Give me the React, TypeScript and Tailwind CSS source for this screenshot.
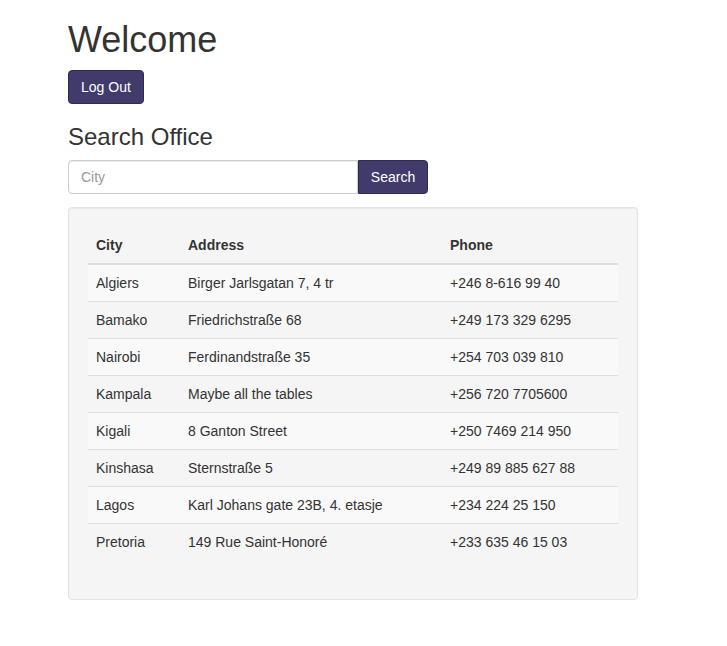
const offices = [
  { city: 'Algiers', address: 'Birger Jarlsgatan 7, 4 tr', phone: '+246 8-616 99 40' },
  { city: 'Bamako', address: 'Friedrichstraße 68', phone: '+249 173 329 6295' },
  { city: 'Nairobi', address: 'Ferdinandstraße 35', phone: '+254 703 039 810' },
  { city: 'Kampala', address: 'Maybe all the tables', phone: '+256 720 7705600' },
  { city: 'Kigali', address: '8 Ganton Street', phone: '+250 7469 214 950' },
  { city: 'Kinshasa', address: 'Sternstraße 5', phone: '+249 89 885 627 88' },
  { city: 'Lagos', address: 'Karl Johans gate 23B, 4. etasje', phone: '+234 224 25 150' },
  { city: 'Pretoria', address: '149 Rue Saint-Honoré', phone: '+233 635 46 15 03' },
];

export default function App() {
  return (
    <div className="min-h-[646px] bg-white pl-[68px] font-['Liberation_Sans',Arial,sans-serif] text-[14px] leading-[20px] text-[#333]">
      <h1 className="pt-[20px] pb-[10px] text-[36px] leading-[39.6px] font-normal">Welcome</h1>
      <button className="h-[34px] rounded-[4px] border border-[#2f2a55] bg-[#413b6b] px-[12px] text-[14px] text-white">
        Log Out
      </button>
      <h3 className="pt-[20px] pb-[10px] text-[24px] leading-[26.4px] font-normal">Search Office</h3>
      <div className="flex w-[360px]">
        <input
          placeholder="City"
          className="h-[34px] w-[290px] rounded-l-[4px] border border-[#ccc] px-[12px] text-[14px] text-[#555] shadow-[inset_0_1px_1px_rgba(0,0,0,0.075)] outline-none placeholder:text-[#999]"
        />
        <button className="h-[34px] w-[70px] rounded-r-[4px] border border-[#2f2a55] bg-[#413b6b] text-[14px] text-white">
          Search
        </button>
      </div>
      <div className="mt-[13px] w-[570px] rounded-[4px] border border-[#e3e3e3] bg-[#f5f5f5] p-[19px] shadow-[inset_0_1px_1px_rgba(0,0,0,0.05)]">
        <table className="mb-[20px] w-full border-collapse">
          <thead>
            <tr className="border-b-2 border-[#ddd] text-left">
              <th className="w-[92px] p-[8px] font-bold">City</th>
              <th className="w-[262px] p-[8px] font-bold">Address</th>
              <th className="p-[8px] font-bold">Phone</th>
            </tr>
          </thead>
          <tbody>
            {offices.map((o, i) => (
              <tr key={o.city} className={`border-t border-[#ddd] ${i % 2 === 0 ? 'bg-[#f9f9f9]' : ''}`}>
                <td className="p-[8px]">{o.city}</td>
                <td className="p-[8px]">{o.address}</td>
                <td className="p-[8px]">{o.phone}</td>
              </tr>
            ))}
          </tbody>
        </table>
      </div>
    </div>
  );
}
